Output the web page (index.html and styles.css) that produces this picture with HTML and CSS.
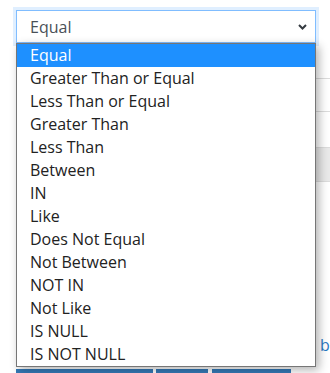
FILE: index.html
```html
<!DOCTYPE html>
<html>
<head>
<meta charset="utf-8">
<link rel="stylesheet" href="styles.css">
</head>
<body>
<div class="page">
  <div class="field">
    <div class="select">
      <span class="value">Equal</span>
      <svg class="chev" width="9" height="6" viewBox="0 0 9 6"><path d="M1 1 L4.5 4.5 L8 1" fill="none" stroke="#343a40" stroke-width="2"/></svg>
    </div>
    <ul class="list">
      <li class="opt active">Equal</li>
      <li class="opt">Greater Than or Equal</li>
      <li class="opt">Less Than or Equal</li>
      <li class="opt">Greater Than</li>
      <li class="opt">Less Than</li>
      <li class="opt">Between</li>
      <li class="opt">IN</li>
      <li class="opt">Like</li>
      <li class="opt">Does Not Equal</li>
      <li class="opt">Not Between</li>
      <li class="opt">NOT IN</li>
      <li class="opt">Not Like</li>
      <li class="opt">IS NULL</li>
      <li class="opt">IS NOT NULL</li>
    </ul>
  </div>
  <div class="table">
    <div class="row r1"></div>
    <div class="row r2"></div>
    <div class="row r3"></div>
    <div class="row r4 shaded"></div>
  </div>
  <div class="links"><span class="lead"></span><a class="link">b</a></div>
  <div class="buttons">
    <span class="btn b1"></span>
    <span class="btn b2"></span>
    <span class="btn b3"></span>
  </div>
</div>
</body>
</html>
```

FILE: styles.css
```css
html, body {
  margin: 0;
  padding: 0;
  background: #fff;
  overflow: hidden;
}
body {
  font-family: "Open Sans", "Liberation Sans", sans-serif;
  width: 330px;
  height: 373px;
}
.page {
  padding: 10px 0 0 16px;
}
.field {
  position: relative;
  width: 300px;
  z-index: 2;
}
.select {
  box-sizing: border-box;
  height: 33px;
  border: 1px solid #80bdff;
  box-shadow: 0 0 0 3px rgba(0, 123, 255, 0.12);
  display: flex;
  align-items: center;
  justify-content: space-between;
  padding: 0 8px 0 13px;
  background: #fff;
}
.value {
  font-size: 16px;
  color: #495057;
}
.chev {
  display: block;
  margin-top: 1px;
}
.list {
  position: absolute;
  top: 33px;
  left: 0;
  width: 300px;
  box-sizing: border-box;
  margin: 0;
  padding: 0;
  list-style: none;
  background: #fff;
  border: 1px solid #767676;
  box-shadow: 3px 3px 9px rgba(0, 0, 0, 0.3);
}
.opt {
  height: 23px;
  line-height: 23px;
  padding-left: 13px;
  font-size: 16px;
  color: #222;
  white-space: nowrap;
}
.opt.active {
  background: #1e90ff;
  color: #fff;
}
.row {
  border-bottom: 1px solid #dcdcdc;
}
.r1 { height: 35px; }
.r2 { height: 32px; }
.r3 { height: 35px; }
.r4 { height: 33px; }
.shaded { background: #e9e9e9; }
.links {
  margin-top: 153px;
  height: 20px;
  display: flex;
  white-space: nowrap;
  font-size: 16px;
  line-height: 20px;
}
.lead {
  flex: 0 0 304px;
}
.link {
  color: #2a7ac4;
}
.buttons {
  margin-top: 14px;
  display: flex;
  gap: 4px;
}
.btn {
  display: block;
  height: 30px;
  background: #3579b6;
}
.b1 { width: 137px; }
.b2 { width: 52px; margin-left: -1px; }
.b3 { width: 79px; }
```
